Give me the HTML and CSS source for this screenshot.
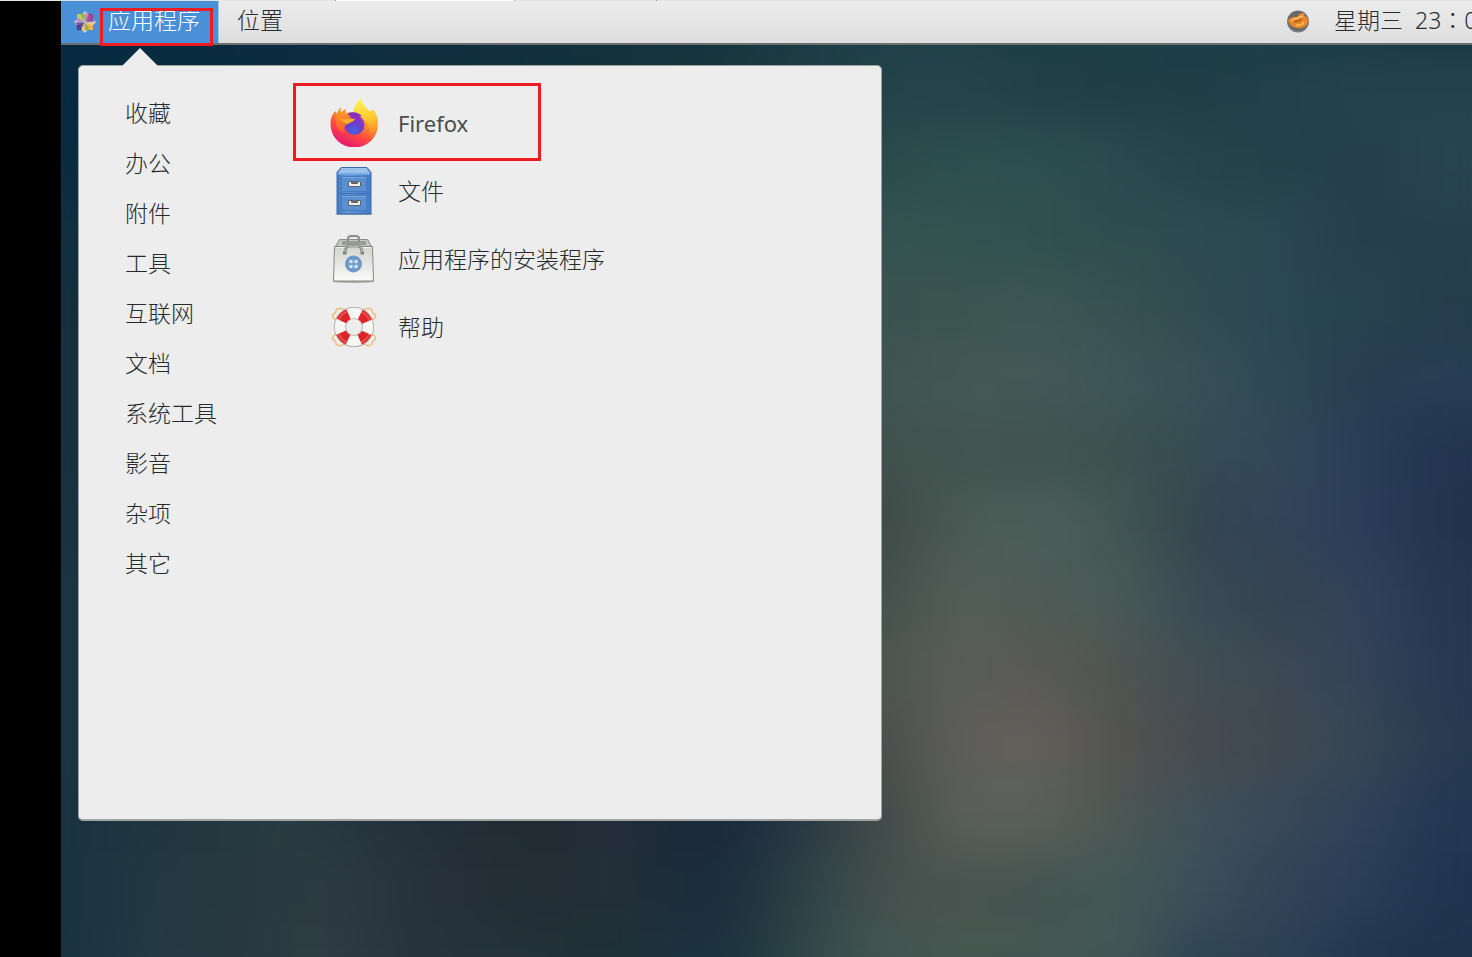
FILE: index.html
```html
<!DOCTYPE html>
<html lang="zh-CN">
<head>
<meta charset="utf-8">
<title>应用程序</title>
<link rel="stylesheet" href="styles.css">
</head>
<body>
<div class="tabstrip"><span class="tab tab-active"></span><span class="tab"></span></div>
<div class="desktop">
  <div class="wallpaper" aria-hidden="true">
    <div class="band b1"></div><div class="band b2"></div><div class="band b3"></div><div class="band b4"></div>
    <div class="band b5"></div><div class="band b6"></div><div class="band b7"></div><div class="band b8"></div>
    <div class="band b9"></div><div class="band b10"></div><div class="band b11"></div><div class="band b12"></div>
    <div class="band b13"></div><div class="band b14"></div>
  </div>
  <header class="panel">
    <button class="panel-item active" type="button" aria-expanded="true">
      <svg class="logo" viewBox="0 0 22 22">
        <path d="M11 0l4 4H7zM22 11l-4 4V7zM11 22l-4-4h8zM0 11l4-4v8z" fill="#d9cfe4"/>
        <path d="M3 3h7.500v7.500H3z" fill="#b0cc4a"/><path d="M11.500 3H19v7.500h-7.500z" fill="#a5317f"/>
        <path d="M3 11.500h7.500V19H3z" fill="#40307e"/><path d="M11.500 11.500H19V19h-7.500z" fill="#efa937"/>
        <path d="M10.500 1v9.500L7 4zM11.500 21v-9.500L15 18z" fill="#8fb842"/>
        <path d="M11.500 1v9.500L15 4zM1 10.500h9.500L4 7z" fill="#c489bd"/>
        <path d="M21 11.500h-9.500L18 15zM10.500 21v-9.500L7 18z" fill="#f3cd85"/>
        <path d="M1 11.500h9.500L4 15zM21 10.500h-9.500L18 7z" fill="#7d5a9c"/>
        <path d="M4 4l14 14M18 4L4 18M11 1v20M1 11h20" stroke="#f1e6ee" stroke-opacity=".6" stroke-width=".7"/>
      </svg>
      <span class="marked">应用程序</span>
    </button>
    <button class="panel-item" type="button">位置</button>
    <span class="spacer"></span>
    <svg class="tray" viewBox="0 0 24 24">
      <circle cx="12" cy="12.500" r="11" fill="#777a7b"/><circle cx="12" cy="12" r="10" fill="#66696a"/>
      <path d="M2 12c2-4 6-5 9-4 2-4 6-5 8-3l-1 2c3 0 5 3 4 6-1 5-6 7-11 6-4 0-7-3-9-7z" fill="#e8852a"/>
      <path d="M5 12c3-3 7-2 9-4l3-1M10 16c4 1 7-1 8-3" fill="none" stroke="#ffb45c" stroke-width="2"/>
      <path d="M8 12c3 2 5-1 8-2" fill="none" stroke="#a8591c" stroke-width="1.500"/>
    </svg>
    <time class="clock"><span>星期三</span><span>23∶0</span></time>
  </header>
  <main class="menu">
    <nav class="categories">
      <button type="button">收藏</button><button type="button">办公</button><button type="button">附件</button>
      <button type="button">工具</button><button type="button">互联网</button><button type="button">文档</button>
      <button type="button">系统工具</button><button type="button">影音</button><button type="button">杂项</button>
      <button type="button">其它</button>
    </nav>
    <div class="apps">
      <button class="app highlighted" type="button">
        <svg viewBox="0 0 48 48">
          <defs>
            <linearGradient id="ffBody" x1=".75" y1=".1" x2=".3" y2="1"><stop offset="0" stop-color="#ffdf3c"/><stop offset=".35" stop-color="#ff9a2b"/><stop offset=".65" stop-color="#ff4a3d"/><stop offset="1" stop-color="#e3107f"/></linearGradient>
            <linearGradient id="ffFlame" x1=".5" y1="0" x2=".6" y2="1"><stop offset="0" stop-color="#fff44f"/><stop offset=".5" stop-color="#ffc72f"/><stop offset="1" stop-color="#ff8a22" stop-opacity="0"/></linearGradient>
            <linearGradient id="ffFox" x1="0" y1="0" x2="0" y2="1"><stop offset="0" stop-color="#ffa320"/><stop offset="1" stop-color="#ff5a34"/></linearGradient>
            <radialGradient id="ffGlobe" cx=".45" cy=".8" r=".8"><stop offset="0" stop-color="#4c63e0"/><stop offset=".5" stop-color="#663fcb"/><stop offset="1" stop-color="#a52fcf"/></radialGradient>
          </defs>
          <path d="M24 48.500C11 48.500 .5 38 .5 25c0-6 2-10 5-13l1 3 4-7v6l5-4v5c2-2 5-2 8-2C24 8 27 3 31 0c1 6 5 8 9 13l3-3c4 5 5 10 5 15 0 14-11 23.500-24 23.500z" fill="url(#ffBody)"/>
          <path d="M24 13c0-5 3-10 7-13 1 6 6 9 9 14l3-3c7 13 4 23-4 29 2-6 1-13-4-18-3-4-7-7-11-9z" fill="url(#ffFlame)"/>
          <circle cx="24.500" cy="26" r="10" fill="url(#ffGlobe)"/>
          <path d="M17 15c5-3 11-2 15 2l-3 1 3 2c-6 0-10-2-15-5z" fill="#8a2fc4"/>
          <path d="M5.500 13l1 3 4-8v6l5-4v5c2 3 5 4 9 5l-1 2-6 3c-4 2-5 6-3 9-6-2-8-6-9-12z" fill="url(#ffFox)"/>
          <path d="M8 19c4 1 7 2 11 1h6l-2 2-6 3z" fill="#ffb12d"/>
        </svg>
        <span class="latin">Firefox</span>
      </button>
      <button class="app" type="button">
        <svg viewBox="0 0 48 48">
          <defs><linearGradient id="cab" x1="0" y1="0" x2="1" y2="0"><stop offset="0" stop-color="#4479c0"/><stop offset=".3" stop-color="#6197d8"/><stop offset="1" stop-color="#457bc4"/></linearGradient></defs>
          <ellipse cx="24" cy="47" rx="19" ry="1.500" fill="#aaa"/>
          <path d="M11 .500h26l4 5V47H7V5.500z" fill="url(#cab)" stroke="#3b6bab"/>
          <path d="M11.500 1h25l3.500 5H8z" fill="#9cc2ec"/>
          <path d="M8 7h32" stroke="#76a7e2" stroke-width="2"/>
          <path d="M11.500 9.500h25v15h-25zM11.500 28.500h25v15h-25z" fill="#5a90d2" stroke="#477bc0"/>
          <path d="M12 10.500h24M12 29.500h24" stroke="#79a8e0"/><path d="M8 26.500h32" stroke="#3a6db2"/>
          <path d="M18.500 14.500v5h12v-5h-3v2h-6v-2zM18.500 33.500v5h12v-5h-3v2h-6v-2z" fill="#eeeeea" stroke="#5d6368" stroke-linejoin="round"/>
          <path d="M21 15h7M21 34h7" stroke="#6b5f52" stroke-width="1.500"/>
        </svg>
        <span>文件</span>
      </button>
      <button class="app" type="button">
        <svg viewBox="0 0 48 48">
          <defs><linearGradient id="bag" x1="0" y1="0" x2="0" y2="1"><stop offset="0" stop-color="#d3d5ce"/><stop offset="1" stop-color="#fafafa"/></linearGradient></defs>
          <ellipse cx="23.500" cy="46.500" rx="21" ry="1.500" fill="#aaa"/>
          <path d="M9.500 4.500h28l4 7h-36z" fill="#c4c6c0" stroke="#8a8d86"/>
          <path d="M12 6h24v4H12z" fill="#9a9d95"/>
          <path d="M18 7V4q0-3 3-3h5q3 0 3 3v3" fill="none" stroke="#8b8e87" stroke-width="2"/>
          <path d="M4.500 11.500h38L43.500 46H3.500z" fill="url(#bag)" stroke="#858880"/>
          <path d="M5.500 12.500h36" stroke="#f0f1ec"/>
          <path d="M13 18h2c0-5 1-7 5-7h7c4 0 5 2 5 7h2" fill="none" stroke="#7d8079" stroke-width="3"/>
          <path d="M15 17c0-4 1-6 5-6h7c4 0 5 2 5 6" fill="none" stroke="#d9dbd5"/>
          <circle cx="23.500" cy="29" r="8.500" fill="#729fcf"/><circle cx="23.500" cy="29" r="7" fill="none" stroke="#6590c4"/>
          <path d="M19.500 25h3v3h-3zM24.500 25h3v3h-3zM19.500 30h3v3h-3zM24.500 30h3v3h-3z" fill="#dfe7ea"/>
        </svg>
        <span>应用程序的安装程序</span>
      </button>
      <button class="app" type="button">
        <svg viewBox="0 0 48 48">
          <g fill="#f4efe4" stroke="#eebd7c" stroke-width="1.500" stroke-linejoin="round">
            <path d="M6 17q-5-3-3-6 3 0 3-4 4-4 9 1l3 3zM42 17q5-3 3-6-3 0-3-4-4-4-9 1l-3 3zM6 31q-5 3-3 6 3 0 3 4 4 4 9-1l3-3zM42 31q5 3 3 6-3 0-3 4-4 4-9-1l-3-3z"/>
          </g>
          <circle cx="24" cy="24" r="14" fill="none" stroke="#a3a5a1" stroke-width="12"/>
          <circle cx="24" cy="24" r="14" fill="none" stroke="#f6f6f4" stroke-width="10.500"/>
          <circle cx="24" cy="24" r="14" fill="none" stroke="#df2427" stroke-width="10.500" stroke-dasharray="10 11.991" stroke-dashoffset="-5.995"/>
          <circle cx="24" cy="24" r="17" fill="none" stroke="#fff" stroke-opacity=".2" stroke-width="2"/>
        </svg>
        <span>帮助</span>
      </button>
    </div>
  </main>
</div>
</body>
</html>
```
FILE: styles.css
```css
*, *::before, *::after { box-sizing: border-box; }

body {
  margin: 0;
  min-height: 100vh;
  display: flex;
  flex-direction: column;
  background: #000;
  color: #252b2d;
  font: 300 23px/32px "Noto Sans", "Noto Sans CJK SC", sans-serif;
  overflow: hidden;
}

button {
  margin: 0;
  padding: 0;
  border: 0;
  background: none;
  color: inherit;
  font: inherit;
  text-align: left;
}

svg { display: block; flex: none; }

.tabstrip {
  display: flex;
  gap: 4px;
  height: 1px;
  padding-left: 335px;
  background: #e4e4e4;
}

.tab { width: 138px; border-right: 1px solid #999; }
.tab-active { width: 180px; border-left: 1px solid #999; background: #fff; }

.desktop {
  position: relative;
  flex: 1;
  margin-left: 61px;
  overflow: hidden;
  background: #20404a;
}

.wallpaper {
  position: absolute;
  inset: -20px -40px -40px;
  display: flex;
  flex-direction: column;
  filter: blur(24px);
}

.band { flex: 1; }
.b1 { background: linear-gradient(90deg, #052a40 3%, #0d2a40 19%, #122d40 32%, #16343c 46%, #20404a 57.600%, #1f3f48 63%, #1c3d45 68.300%, #1d3f47 73.700%, #1d3f48 79%, #1c3d46 84.400%, #1a3a45 89.800%, #173542 95.200%); }
.b2 { background: linear-gradient(90deg, #052a3f 3%, #16343c 46%, #23434a 57.600%, #25434a 63%, #214046 68.300%, #203f45 73.700%, #1f3e46 79%, #21404a 84.400%, #23424d 89.800%, #23424e 95.200%); }
.b3 { background: linear-gradient(90deg, #082c3f 3%, #1f3d42 46%, #2a4a4c 57.600%, #2e4f50 63%, #2d4f51 68.300%, #2a4a4f 73.700%, #254349 79%, #23414a 84.400%, #253f4a 89.800%, #28444f 95.200%); }
.b4 { background: linear-gradient(90deg, #102f3f 3%, #2a4646 46%, #355350 57.600%, #325250 63%, #314f4f 68.300%, #2f4c50 73.700%, #2e4b51 79%, #2b4751 84.400%, #263f4a 89.800%, #25404c 95.200%); }
.b5 { background: linear-gradient(90deg, #152e3e 3%, #2e4646 46%, #3a5350 57.600%, #3b5450 63%, #3c5754 68.300%, #375152 73.700%, #304b50 79%, #2b4753 84.400%, #27424f 89.800%, #253d4b 95.200%); }
.b6 { background: linear-gradient(90deg, #17303f 3%, #304646 46%, #405551 57.600%, #445955 63%, #435957 68.300%, #3d5558 73.700%, #385057 79%, #2e4954 84.400%, #273d50 89.800%, #273e55 95.200%); }
.b7 { background: linear-gradient(90deg, #17303f 3%, #304343 46%, #41514c 57.600%, #43544f 63%, #40534f 68.300%, #3c524f 73.700%, #344b53 79%, #33485a 84.400%, #293e57 89.800%, #22344f 95.200%); }
.b8 { background: linear-gradient(90deg, #183240 3%, #304040 46%, #3e4a46 57.600%, #4b5a55 63%, #4d5f5a 68.300%, #425653 73.700%, #34444f 79%, #334459 84.400%, #2c3d5a 89.800%, #22334d 95.200%); }
.b9 { background: linear-gradient(90deg, #1a3440 3%, #304040 46%, #454f4b 57.600%, #545f5a 63%, #4d5a55 68.300%, #4a5a56 73.700%, #394a56 79%, #34434f 84.400%, #33425b 89.800%, #25364f 95.200%); }
.b10 { background: linear-gradient(90deg, #1a3440 3%, #304040 46%, #4c5650 57.600%, #5b5d58 63%, #5a5955 68.300%, #4e5551 73.700%, #414e55 79%, #3d4852 84.400%, #34435a 89.800%, #273850 95.200%); }
.b11 { background: linear-gradient(90deg, #1a3440 3%, #283842 46%, #4b4f4a 57.600%, #5f5e5a 63%, #62605b 68.300%, #54534f 73.700%, #464b50 79%, #3f4850 84.400%, #384755 89.800%, #273a50 95.200%); }
.b12 { background: linear-gradient(90deg, #19323f 3%, #20373f 9%, #23363e 12%, #2a3b42 18%, #232f39 27%, #212b33 34%, #232e3a 40%, #192838 46%, #1e2d3f 49%, #2b3943 53%, #414b48 57.600%, #5b605b 63%, #5b605b 68.300%, #4c5652 73.700%, #40505a 79%, #394857 84.400%, #30425a 89.800%, #233752 95.200%); }
.b13 { background: linear-gradient(90deg, #19323f 3%, #223943 9%, #25373f 13%, #2d3b43 20%, #26313c 27%, #222d35 34%, #222e38 40%, #1a2c3b 46%, #20323d 49%, #2f4348 53%, #45504c 57.600%, #495450 63%, #455450 68.300%, #435856 73.700%, #3b4f5a 79%, #314356 84.400%, #2a3e58 89.800%, #20344f 95.200%); }
.b14 { background: linear-gradient(90deg, #19323f 3%, #243a44 9%, #27373f 13%, #303c44 20%, #27333c 27%, #24313a 34%, #1f3037 39%, #1b3240 46%, #1f373e 49%, #334a4b 53%, #445651 57.600%, #485851 63%, #465852 68.300%, #425957 73.700%, #2e4352 79%, #2e4256 84.400%, #213550 89.800%, #1f334d 95.200%); }

.panel {
  position: relative;
  display: flex;
  height: 44px;
  border-bottom: 2px solid #6b6f6e;
  background: linear-gradient(#ececec, #dedede);
  white-space: nowrap;
}

.panel-item {
  display: flex;
  padding: 3px 18px;
}

.panel-item.active {
  gap: 12px;
  padding: 3px 18px 3px 13px;
  border-right: 1px solid #a5c8ee;
  background: #4a90d9;
  color: #fff;
}

.logo { width: 22px; height: 22px; margin-top: 7px; }

.marked { position: relative; }

.marked::after {
  content: "";
  position: absolute;
  inset: 4px -13px -9px -8px;
  height: 38px;
  border: 3px solid #ed1c24;
}

.spacer { flex: 1; }

.tray { width: 24px; height: 24px; margin: 8px 24px 0 0; }

.clock {
  display: flex;
  gap: 12px;
  width: 138px;
  padding-top: 3px;
  overflow: hidden;
}

.menu {
  position: relative;
  display: flex;
  width: 804px;
  max-width: calc(100% - 36px);
  min-height: 756px;
  margin: 20px 17px;
  padding: 18px 24px;
  border: 1px solid #a0a3a2;
  border-bottom-width: 2px;
  border-radius: 5px;
  background: #ededed;
}

.menu::before {
  content: "";
  position: absolute;
  top: -18px;
  left: 42px;
  width: 38px;
  height: 19px;
  background: #ededed;
  clip-path: polygon(50% 0, 100% 100%, 0 100%);
}

.categories {
  display: flex;
  flex-direction: column;
  width: 190px;
  padding: 4px 0 0 22px;
}

.categories button { height: 50px; }

.apps { flex: 1; padding-top: 5px; }

.app {
  position: relative;
  display: flex;
  align-items: center;
  gap: 20px;
  width: 100%;
  height: 68px;
  padding-left: 37px;
}

.app svg { width: 48px; height: 48px; }

.latin { font-size: 22px; font-weight: 400; color: #484d4f; }

.highlighted::after {
  content: "";
  position: absolute;
  top: -6px;
  left: 0;
  width: 248px;
  height: 78px;
  border: 3px solid #ed1c24;
}
```
